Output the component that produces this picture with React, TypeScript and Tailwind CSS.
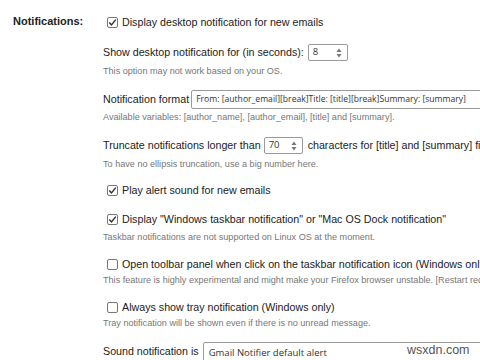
import React from "react";

const sans = { fontFamily: '"Liberation Sans", Arial, sans-serif' };

function Check({ checked }: { checked?: boolean }) {
  return (
    <span className="inline-flex w-[11px] h-[11px] shrink-0 items-center justify-center rounded-[2px] border border-[#777] bg-white">
      {checked && (
        <svg width="9" height="9" viewBox="0 0 9 9">
          <path d="M1.3 4.6 L3.5 6.9 L7.8 1.6" fill="none" stroke="#333" strokeWidth="1.5" />
        </svg>
      )}
    </span>
  );
}

function Spin({ value, w }: { value: string; w: string }) {
  return (
    <span className={`relative inline-flex h-[17px] ${w} items-center rounded-[2px] border border-[#9a9a9a] bg-white pl-[4px] text-[9.5px] text-[#333] font-['Open_Sans',sans-serif]`}>
      {value}
      <svg className="absolute right-[5px] top-[3px]" width="6" height="10" viewBox="0 0 6 10">
        <path d="M3 0.5 L5.5 4 L0.5 4 Z" fill="#777" />
        <path d="M3 9.5 L5.5 6 L0.5 6 Z" fill="#777" />
      </svg>
    </span>
  );
}

function Row({ mt, children }: { mt: string; children: React.ReactNode }) {
  return <div className={`${mt} flex h-[20px] items-center whitespace-nowrap text-[10.7px] text-[#222]`}>{children}</div>;
}

function CheckRow({ mt, checked, label }: { mt: string; checked?: boolean; label: string }) {
  return (
    <Row mt={mt}>
      <span className="ml-[4px] mr-[4px] flex">
        <Check checked={checked} />
      </span>
      {label}
    </Row>
  );
}

function Desc({ mt, children }: { mt: string; children: React.ReactNode }) {
  return <div className={`${mt} h-[12px] leading-[12px] whitespace-nowrap text-[9.1px] text-[#777]`}>{children}</div>;
}

export default function App() {
  return (
    <div className="relative w-[480px] h-[360px] overflow-hidden bg-white" style={sans}>
      <div className="flex">
        <div className="w-[103px] shrink-0 pl-[13px] pt-[13px]">
          <div className="text-[11px] font-bold text-[#222]">Notifications:</div>
        </div>
        <div className="flex flex-col pt-[12px]">
          <CheckRow mt="mt-0" checked label="Display desktop notification for new emails" />
          <Row mt="mt-[10px]">
            <span className="mr-[4px]">Show desktop notification for (in seconds):</span>
            <Spin value="8" w="w-[40px]" />
          </Row>
          <Desc mt="mt-[3px]">This option may not work based on your OS.</Desc>
          <Row mt="mt-[12px]">
            <span className="mr-[2px]">Notification format</span>
            <span className="flex h-[19px] w-[320px] items-center rounded-[2px] border border-[#9a9a9a] bg-white pl-[4px] text-[8.6px] text-[#333] font-['Open_Sans',sans-serif]">
              From: [author_email][break]Title: [title][break]Summary: [summary]
            </span>
          </Row>
          <Desc mt="mt-[2px]">Available variables: [author_name], [author_email], [title] and [summary].</Desc>
          <Row mt="mt-[12px]">
            <span className="mr-[3px]">Truncate notifications longer than</span>
            <Spin value="70" w="w-[39px]" />
            <span className="ml-[5px]">characters for [title] and [summary] fields.</span>
          </Row>
          <Desc mt="mt-[3px]">To have no ellipsis truncation, use a big number here.</Desc>
          <CheckRow mt="mt-[10px]" checked label="Play alert sound for new emails" />
          <CheckRow mt="mt-[9px]" checked label={'Display "Windows taskbar notification" or "Mac OS Dock notification"'} />
          <Desc mt="mt-[2px]">Taskbar notifications are not supported on Linux OS at the moment.</Desc>
          <CheckRow mt="mt-[11px]" label="Open toolbar panel when click on the taskbar notification icon (Windows only)" />
          <Desc mt="mt-0">This feature is highly experimental and might make your Firefox browser unstable. [Restart required]</Desc>
          <CheckRow mt="mt-[11px]" label="Always show tray notification (Windows only)" />
          <Desc mt="mt-0">Tray notification will be shown even if there is no unread message.</Desc>
          <Row mt="mt-[12px]">
            <span className="mr-[4px]">Sound notification is</span>
            <span className="flex h-[22px] w-[300px] items-center self-start mt-[1px] rounded-[2px] border border-[#9a9a9a] bg-white pl-[5px] text-[9.5px] text-[#333] font-['Open_Sans',sans-serif]">
              Gmail Notifier default alert
            </span>
          </Row>
        </div>
      </div>
      <div className="absolute left-[407px] top-[341px] text-[12.5px] text-[#555]">wsxdn.com</div>
    </div>
  );
}
